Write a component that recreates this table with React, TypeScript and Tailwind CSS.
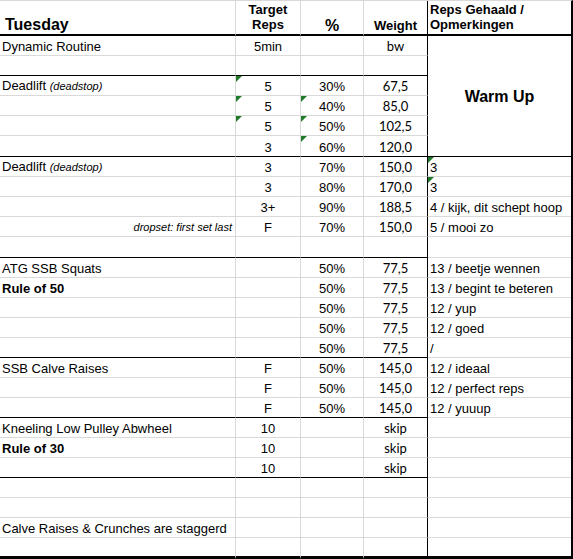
import type { ReactNode } from "react";

const arial = "font-['Liberation_Sans',Arial,sans-serif]";
const lato = "font-['Lato','Open_Sans',sans-serif]";

type Row = {
  a?: ReactNode;
  aRight?: boolean;
  b?: string;
  c?: string;
  d?: string;
  e?: string;
  marks?: string;
};

const deadlift = (
  <span>
    Deadlift <i className="text-[11px]">(deadstop)</i>
  </span>
);

const rows: Row[] = [
  { a: "Dynamic Routine", b: "5min", d: "bw" },
  {},
  { a: deadlift, b: "5", c: "30%", d: "67,5", marks: "b" },
  { b: "5", c: "40%", d: "85,0", marks: "bc" },
  { b: "5", c: "50%", d: "102,5", marks: "bc" },
  { b: "3", c: "60%", d: "120,0", marks: "c" },
  { a: deadlift, b: "3", c: "70%", d: "150,0", e: "3", marks: "e" },
  { b: "3", c: "80%", d: "170,0", e: "3", marks: "e" },
  { b: "3+", c: "90%", d: "188,5", e: "4 / kijk, dit schept hoop" },
  {
    a: <i className="text-[11px]">dropset: first set last</i>,
    aRight: true,
    b: "F",
    c: "70%",
    d: "150,0",
    e: "5 / mooi zo",
  },
  {},
  { a: "ATG SSB Squats", c: "50%", d: "77,5", e: "13 / beetje wennen" },
  { a: <b>Rule of 50</b>, c: "50%", d: "77,5", e: "13 / begint te beteren" },
  { c: "50%", d: "77,5", e: "12 / yup" },
  { c: "50%", d: "77,5", e: "12 / goed" },
  { c: "50%", d: "77,5", e: "/" },
  { a: "SSB Calve Raises", b: "F", c: "50%", d: "145,0", e: "12 / ideaal" },
  { b: "F", c: "50%", d: "145,0", e: "12 / perfect reps" },
  { b: "F", c: "50%", d: "145,0", e: "12 / yuuup" },
  { a: "Kneeling Low Pulley Abwheel", b: "10", d: "skip" },
  { a: <b>Rule of 30</b>, b: "10", d: "skip" },
  { b: "10", d: "skip" },
  {},
  {},
  { a: "Calve Raises & Crunches are staggerd" },
  {},
];

// rows (1-based) that close a block with a black line over columns A-D
const blockEnds = [2, 6, 11, 16, 19, 22];

function Mark() {
  return (
    <svg className="absolute left-0 top-0" width="6" height="6" viewBox="0 0 6 6">
      <polygon points="0,0 6,0 0,6" fill="#1f7a2a" />
    </svg>
  );
}

export default function App() {
  return (
    <div className="bg-white">
      <div
        className={`grid w-fit grid-cols-[236px_65px_63px_64px_143px] grid-rows-[35px_20px_20px_20px_20px_20px_21px_20px_20px_20px_20px_21px_repeat(14,20px)_21px] border-t border-r-2 border-t-[#d9d9d9] border-r-black text-[13px] leading-[15px] text-black ${arial}`}
      >
        {/* header */}
        <div className="flex items-end border-r border-b-2 border-r-[#d9d9d9] border-b-black pl-[5px] text-[16px] leading-[18px] font-bold">
          Tuesday
        </div>
        <div className="flex flex-col justify-end items-center border-r border-b-2 border-r-[#d9d9d9] border-b-black pb-[2px] font-bold">
          <span>Target</span>
          <span>Reps</span>
        </div>
        <div className="flex items-end justify-center border-r border-b-2 border-r-[#d9d9d9] border-b-black text-[16px] leading-[16px] font-bold">
          %
        </div>
        <div className="flex items-end justify-center border-r border-b-2 border-r-black border-b-black pb-[1px] font-bold">
          Weight
        </div>
        <div className="flex flex-col justify-end border-b-2 border-b-black pb-[2px] pl-[2px] font-bold">
          <span>Reps Gehaald /</span>
          <span>Opmerkingen</span>
        </div>

        {rows.map((r, i) => {
          const n = i + 1;
          const last = n === rows.length;
          const bottom = last
            ? "border-b-[3px] border-b-black"
            : blockEnds.includes(n)
              ? "border-b border-b-black"
              : "border-b border-b-[#d9d9d9]";
          const eBottom = last ? "border-b-[3px] border-b-black" : "border-b border-b-[#d9d9d9]";
          const marks = r.marks ?? "";
          return (
            <div key={n} className="contents">
              <div
                className={`flex items-end overflow-hidden whitespace-nowrap border-r border-r-[#d9d9d9] pb-[1px] ${bottom} ${
                  r.aRight ? "justify-end pr-[3px]" : "pl-[2px]"
                }`}
              >
                {r.a}
              </div>
              <div className={`relative flex items-end justify-center border-r border-r-[#d9d9d9] pb-[1px] ${bottom}`}>
                {marks.includes("b") && <Mark />}
                {r.b}
              </div>
              <div className={`relative flex items-end justify-center border-r border-r-[#d9d9d9] pb-[1px] ${bottom}`}>
                {marks.includes("c") && <Mark />}
                {r.c}
              </div>
              <div className={`flex items-end justify-center border-r border-r-black pb-[1px] ${bottom} ${lato}`}>
                {r.d}
              </div>
              {n === 1 && (
                <div className="row-span-6 flex items-center justify-center border-b border-b-black text-[16px] font-bold">
                  Warm Up
                </div>
              )}
              {n > 6 && (
                <div className={`relative flex items-end whitespace-nowrap pb-[1px] pl-[2px] ${eBottom}`}>
                  {marks.includes("e") && <Mark />}
                  {r.e}
                </div>
              )}
            </div>
          );
        })}
      </div>
    </div>
  );
}
